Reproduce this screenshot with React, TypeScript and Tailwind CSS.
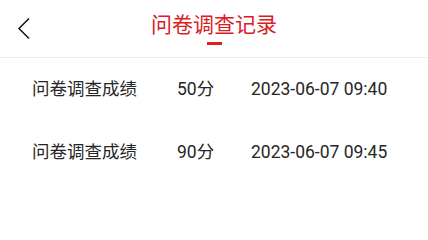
const records = [
  { name: '问卷调查成绩', score: '50分', time: '2023-06-07 09:40' },
  { name: '问卷调查成绩', score: '90分', time: '2023-06-07 09:45' },
];

export default function App() {
  return (
    <div
      className="min-h-[200px] w-full bg-white text-[#262626]"
      style={{ fontFamily: 'Roboto, "Noto Sans CJK SC", sans-serif' }}
    >
      {/* Header */}
      <div className="grid h-[58px] grid-cols-[1fr_auto_1fr] border-b border-[#eeeeee]">
        <div className="flex items-start pl-[17px] pt-[17px]">
          <svg width="14" height="23" viewBox="0 0 14 23" fill="none">
            <path d="M12 1.5 L2 11.5 L12 21.5" stroke="#111" strokeWidth="1.5" />
          </svg>
        </div>
        <div className="flex flex-col items-center pt-[11px]">
          <span className="text-[21px] leading-[28px] text-[#d9201f]">问卷调查记录</span>
          <span className="mt-[3px] h-[3px] w-[15px] bg-[#d9201f]" />
        </div>
        <div />
      </div>

      {/* Records */}
      {records.map((r, i) => (
        <div key={i} className="flex h-[63px] items-center pl-8 text-[17.5px]">
          <span className="w-[145px]">{r.name}</span>
          <span className="w-[74px]">{r.score}</span>
          <span>{r.time}</span>
        </div>
      ))}
    </div>
  );
}
